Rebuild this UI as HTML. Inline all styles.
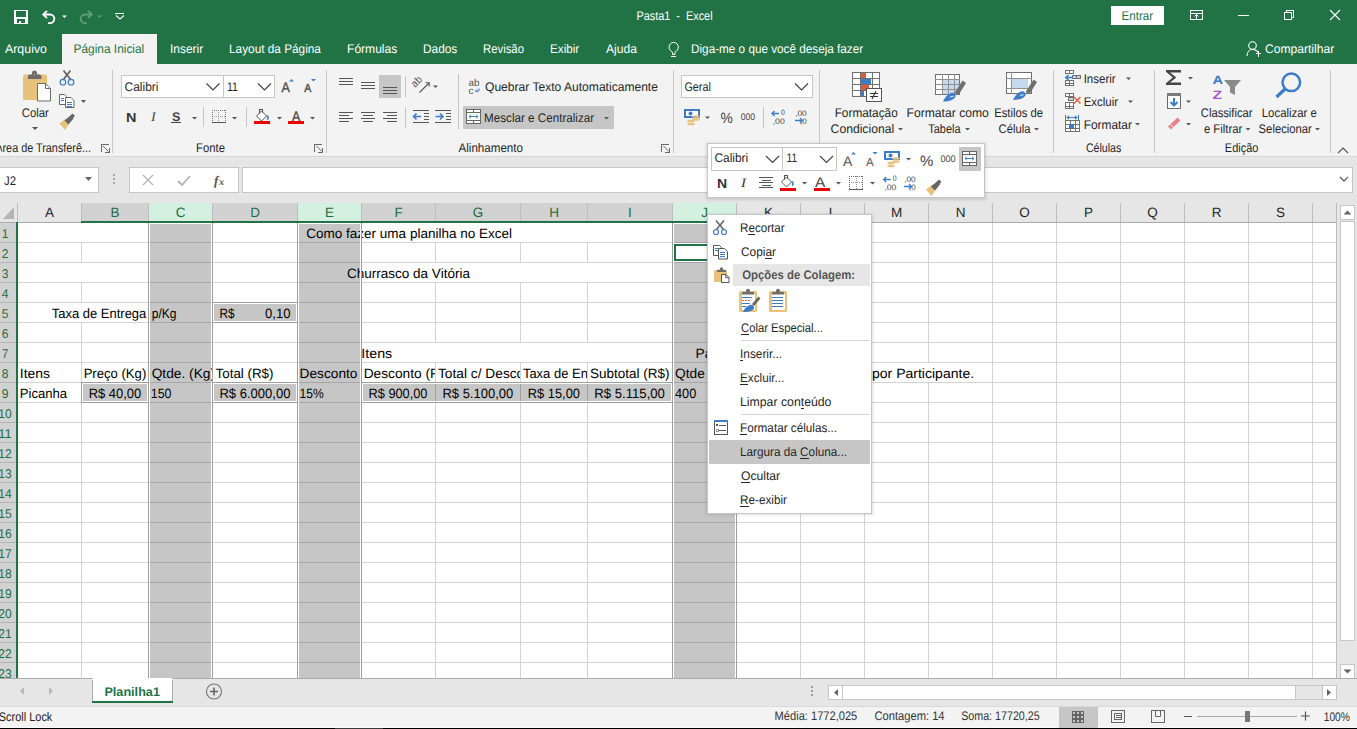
<!DOCTYPE html>
<html><head><meta charset="utf-8"><title>Pasta1 - Excel</title>
<style>html,body{margin:0;padding:0;background:#fff;overflow:hidden;width:1357px;height:729px}svg{display:block}text{shape-rendering:auto}</style>
</head><body><svg width="1357" height="729" viewBox="0 0 1357 729" shape-rendering="crispEdges" text-rendering="geometricPrecision"><defs><clipPath id="c0"><rect x="149" y="362" width="63" height="20"/></clipPath><clipPath id="c1"><rect x="361" y="362" width="74" height="20"/></clipPath><clipPath id="c2"><rect x="436" y="362" width="84" height="20"/></clipPath><clipPath id="c3"><rect x="521" y="362" width="66" height="20"/></clipPath><clipPath id="c4"><rect x="673" y="362" width="35" height="20"/></clipPath><clipPath id="c5"><rect x="673" y="342" width="35" height="20"/></clipPath></defs><rect x="0" y="0" width="1357" height="729" fill="#ffffff" />
<rect x="0" y="0" width="1357" height="64" fill="#217346" />
<rect x="14" y="10" width="14" height="14" fill="#fff" />
<rect x="16" y="11" width="10" height="6" fill="#217346" />
<rect x="17" y="19" width="8" height="4" fill="#217346" />
<rect x="19" y="21" width="2" height="2" fill="#fff" />
<path d="M43.5 14.5h6.5a4.3 4.3 0 0 1 0 8.6h-2" fill="none" stroke="#fff" stroke-width="1.9" style="shape-rendering:auto"/>
<path d="M47 10.8l-3.7 3.7 3.7 3.7" fill="none" stroke="#fff" stroke-width="1.9" style="shape-rendering:auto"/>
<path d="M62 15.5h5l-2.5 2.5z" fill="#fff" style="shape-rendering:auto"/>
<path d="M91.5 14.5h-6.5a4.3 4.3 0 0 0 0 8.6h2" fill="none" stroke="#5f9c79" stroke-width="1.9" style="shape-rendering:auto"/>
<path d="M88 10.8l3.7 3.7-3.7 3.7" fill="none" stroke="#5f9c79" stroke-width="1.9" style="shape-rendering:auto"/>
<path d="M97 15.5h5l-2.5 2.5z" fill="#5f9c79" style="shape-rendering:auto"/>
<rect x="115" y="13" width="9" height="1" fill="#fff"/>
<path d="M116 15.5l4 3.5 4-3.5" fill="none" stroke="#fff" stroke-width="1.1" style="shape-rendering:auto"/>
<text y="20" font-size="12.5" fill="#fff" font-family="Liberation Sans" x="636.43" textLength="76.15" lengthAdjust="spacingAndGlyphs" >Pasta1  -  Excel</text>
<rect x="1111" y="6" width="53" height="19" fill="#fff" rx="1.5"/>
<text y="20" font-size="12.5" fill="#217346" font-family="Liberation Sans" x="1121.58" textLength="31.48" lengthAdjust="spacingAndGlyphs" >Entrar</text>
<rect x="1190.5" y="10.5" width="12" height="9" fill="none" stroke="#fff" stroke-width="1" />
<rect x="1190" y="13" width="13" height="1" fill="#fff"/>
<path d="M1196.5 19v-4.5M1194.5 16.5l2-2 2 2" fill="none" stroke="#fff" stroke-width="1" shape-rendering="auto"/>
<rect x="1238" y="15" width="11" height="1" fill="#fff"/>
<rect x="1284.5" y="12.5" width="7" height="7" fill="none" stroke="#fff" stroke-width="1" />
<path d="M1286.5 12.5v-2h7v7h-2" fill="none" stroke="#fff" stroke-width="1" />
<path d="M1330 10l10 10M1340 10l-10 10" fill="none" stroke="#fff" stroke-width="1.1" shape-rendering="auto"/>
<rect x="62" y="34" width="95" height="30" fill="#f3f3f3" />
<text y="53" font-size="12.5" fill="#fff" font-family="Liberation Sans" x="5.00" textLength="41.95" lengthAdjust="spacingAndGlyphs" >Arquivo</text>
<text y="53" font-size="12.5" fill="#217346" font-family="Liberation Sans" x="73.55" textLength="70.69" lengthAdjust="spacingAndGlyphs" >Página Inicial</text>
<text y="53" font-size="12.5" fill="#fff" font-family="Liberation Sans" x="170.05" textLength="33.11" lengthAdjust="spacingAndGlyphs" >Inserir</text>
<text y="53" font-size="12.5" fill="#fff" font-family="Liberation Sans" x="229.06" textLength="91.90" lengthAdjust="spacingAndGlyphs" >Layout da Página</text>
<text y="53" font-size="12.5" fill="#fff" font-family="Liberation Sans" x="347.04" textLength="50.20" lengthAdjust="spacingAndGlyphs" >Fórmulas</text>
<text y="53" font-size="12.5" fill="#fff" font-family="Liberation Sans" x="423.05" textLength="34.18" lengthAdjust="spacingAndGlyphs" >Dados</text>
<text y="53" font-size="12.5" fill="#fff" font-family="Liberation Sans" x="483.10" textLength="40.86" lengthAdjust="spacingAndGlyphs" >Revisão</text>
<text y="53" font-size="12.5" fill="#fff" font-family="Liberation Sans" x="550.07" textLength="29.08" lengthAdjust="spacingAndGlyphs" >Exibir</text>
<text y="53" font-size="12.5" fill="#fff" font-family="Liberation Sans" x="606.00" textLength="30.95" lengthAdjust="spacingAndGlyphs" >Ajuda</text>
<text y="53" font-size="12.5" fill="#fff" font-family="Liberation Sans" x="691.06" textLength="172.09" lengthAdjust="spacingAndGlyphs" >Diga-me o que você deseja fazer</text>
<path d="M672.5 54.5v-2.2c-2.2-1.3-3.4-3-3.4-5.3a4.6 4.6 0 0 1 9.2 0c0 2.3-1.2 4-3.4 5.3v2.2z" fill="none" stroke="#fff" stroke-width="1" shape-rendering="auto"/>
<rect x="671" y="56" width="5" height="1" fill="#fff"/>
<path d="M1247 56c0-4 2.5-6.5 5.5-6.5s5 2 5.5 3" fill="none" stroke="#fff" stroke-width="1.1" shape-rendering="auto"/>
<circle cx="1252.5" cy="45.5" r="3.8" fill="none" stroke="#fff" stroke-width="1.1" shape-rendering="auto"/>
<path d="M1255.5 53.5h5.5M1258 50.5v6" fill="none" stroke="#fff" stroke-width="1" />
<text y="53" font-size="12.5" fill="#fff" font-family="Liberation Sans" x="1265.00" textLength="69.16" lengthAdjust="spacingAndGlyphs" >Compartilhar</text>
<rect x="0" y="64" width="1357" height="92" fill="#f3f3f3" />
<rect x="0" y="156" width="1357" height="1" fill="#d5d5d5"/>
<rect x="0" y="157" width="1357" height="46" fill="#e6e6e6" />
<rect x="112" y="70" width="1" height="83" fill="#c9c9c9"/>
<rect x="326" y="70" width="1" height="83" fill="#c9c9c9"/>
<rect x="673" y="70" width="1" height="83" fill="#c9c9c9"/>
<rect x="819" y="70" width="1" height="83" fill="#c9c9c9"/>
<rect x="1053" y="70" width="1" height="83" fill="#c9c9c9"/>
<rect x="1154" y="70" width="1" height="83" fill="#c9c9c9"/>
<rect x="1330" y="70" width="1" height="83" fill="#c9c9c9"/>
<text y="152" font-size="12.5" fill="#262626" font-family="Liberation Sans" x="2.50" textLength="88.51" lengthAdjust="spacingAndGlyphs" >rea de Transferê...</text>
<text y="152" font-size="12.5" fill="#262626" font-family="Liberation Sans" x="196.10" textLength="28.86" lengthAdjust="spacingAndGlyphs" >Fonte</text>
<text y="152" font-size="12.5" fill="#262626" font-family="Liberation Sans" x="458.50" textLength="64.46" lengthAdjust="spacingAndGlyphs" >Alinhamento</text>
<path d="M101.0 151.5v-7.5h7.5" fill="none" stroke="#6a6a6a" stroke-width="1" />
<path d="M103.0 146.0l5.5 5.5" fill="none" stroke="#6a6a6a" stroke-width="1" style="shape-rendering:auto"/>
<path d="M109.0 147.5v4.5h-4.5" fill="none" stroke="#6a6a6a" stroke-width="1" />
<path d="M314.5 151.5v-7.5h7.5" fill="none" stroke="#6a6a6a" stroke-width="1" />
<path d="M316.5 146.0l5.5 5.5" fill="none" stroke="#6a6a6a" stroke-width="1" style="shape-rendering:auto"/>
<path d="M322.5 147.5v4.5h-4.5" fill="none" stroke="#6a6a6a" stroke-width="1" />
<path d="M661.5 151.5v-7.5h7.5" fill="none" stroke="#6a6a6a" stroke-width="1" />
<path d="M663.5 146.0l5.5 5.5" fill="none" stroke="#6a6a6a" stroke-width="1" style="shape-rendering:auto"/>
<path d="M669.5 147.5v4.5h-4.5" fill="none" stroke="#6a6a6a" stroke-width="1" />
<path d="M0 145.5l2 6" fill="none" stroke="#444" stroke-width="1.1" style="shape-rendering:auto"/>
<path d="M1338 153l5-5 5 5" fill="none" stroke="#555" stroke-width="1.1" shape-rendering="auto"/>
<path d="M23 76.5a2 2 0 0 1 2-2h20a2 2 0 0 1 2 2v22.5a1 1 0 0 1-1 1h-22a1 1 0 0 1-1-1z" fill="#e8c17a" style="shape-rendering:auto"/>
<path d="M28 79v-2.5a2 2 0 0 1 2-2h2v-1.5a2.5 2.5 0 0 1 5 0v1.5h2.5a2 2 0 0 1 2 2v2.5z" fill="#6d6d6d" style="shape-rendering:auto"/>
<circle cx="34.5" cy="74.5" r="1" fill="#e8c17a"/>
<path d="M37.5 83.5h8l5 5v12.5h-13z" fill="#fff" stroke="#6a6a6a" stroke-width="1" style="shape-rendering:auto"/>
<path d="M45.5 83.5v5h5" fill="none" stroke="#6a6a6a" stroke-width="1" style="shape-rendering:auto"/>
<text y="117" font-size="12.5" fill="#262626" font-family="Liberation Sans" x="21.70" textLength="27.15" lengthAdjust="spacingAndGlyphs" >Colar</text>
<path d="M32 127h6l-3 3z" fill="#555" style="shape-rendering:auto"/>
<path d="M63.5 70.5l7.5 9.5M70.5 70.5l-7.5 9.5" fill="none" stroke="#666" stroke-width="1.8" style="shape-rendering:auto"/>
<circle cx="62.9" cy="82.2" r="2.8" fill="none" stroke="#3d7cc9" stroke-width="1.2" style="shape-rendering:auto"/>
<circle cx="71" cy="82.2" r="2.8" fill="none" stroke="#3d7cc9" stroke-width="1.2" style="shape-rendering:auto"/>
<path d="M59.5 94.5h5l2 2v8h-7z" fill="#fff" stroke="#666" stroke-width="1" style="shape-rendering:auto"/>
<path d="M65.5 97.5h5.5l3 3v7h-8.5z" fill="#fff" stroke="#666" stroke-width="1" style="shape-rendering:auto"/>
<path d="M61 98.5h3M61 100.5h3M67 102.5h5M67 104.5h5M67 106.5h5" fill="none" stroke="#3d7cc9" stroke-width="1" />
<path d="M81 100h5l-2.5 3z" fill="#555" style="shape-rendering:auto"/>
<path d="M59.5 123.5l6.5-5 4 4-5 7.5z" fill="#e8c17a" style="shape-rendering:auto"/>
<path d="M64.5 120.5l6-5 3 3-5 6z" fill="#666" style="shape-rendering:auto"/>
<path d="M69.5 116.5l3-3 2.5 2.5-3 3z" fill="#666" style="shape-rendering:auto"/>
<rect x="121.5" y="75.5" width="102" height="22" fill="#fff" stroke="#c6c6c6" stroke-width="1" />
<rect x="223.5" y="75.5" width="51" height="22" fill="#fff" stroke="#c6c6c6" stroke-width="1" />
<text y="91" font-size="12.5" fill="#262626" font-family="Liberation Sans" x="124.50" textLength="34.05" lengthAdjust="spacingAndGlyphs" >Calibri</text>
<path d="M206.5 83.5l6.5 6.5 6.5-6.5" fill="none" stroke="#444" stroke-width="1.2" style="shape-rendering:auto"/>
<text y="91" font-size="12.5" fill="#262626" font-family="Liberation Sans" x="227.00" textLength="10.96" lengthAdjust="spacingAndGlyphs" >11</text>
<path d="M258 83.5l6.5 6.5 6.5-6.5" fill="none" stroke="#444" stroke-width="1.2" style="shape-rendering:auto"/>
<text y="91.8" font-size="14" fill="#555" font-family="Liberation Sans" x="281.50" textLength="8.31" lengthAdjust="spacingAndGlyphs" stroke="#555" stroke-width="0.5">A</text>
<path d="M289 81.5l2.5-2.5 2.5 2.5z" fill="#3d7cc9" style="shape-rendering:auto"/>
<text y="91.8" font-size="11.5" fill="#555" font-family="Liberation Sans" x="304.20" textLength="7.00" lengthAdjust="spacingAndGlyphs" stroke="#555" stroke-width="0.5">A</text>
<path d="M311 79h5l-2.5 2.5z" fill="#3d7cc9" style="shape-rendering:auto"/>
<text y="122" font-size="13" fill="#333" font-family="Liberation Sans" x="126.00" textLength="10.43" lengthAdjust="spacingAndGlyphs" font-weight="bold" >N</text>
<text y="121" font-size="13" fill="#444" font-family="Liberation Serif" x="151.08" textLength="4.69" lengthAdjust="spacingAndGlyphs" font-style="italic">I</text>
<text y="120.5" font-size="12.5" fill="#444" font-family="Liberation Sans" x="172.00" textLength="8.34" lengthAdjust="spacingAndGlyphs" font-weight="bold" >S</text>
<rect x="171" y="122" width="10" height="1" fill="#444"/>
<path d="M192 117h5l-2.5 2.5z" fill="#555" style="shape-rendering:auto"/>
<rect x="203" y="107" width="1" height="20" fill="#c6c6c6"/>
<rect x="212" y="110" width="1" height="1" fill="#777"/>
<rect x="212" y="116" width="1" height="1" fill="#999"/>
<rect x="214" y="110" width="1" height="1" fill="#777"/>
<rect x="214" y="116" width="1" height="1" fill="#999"/>
<rect x="216" y="110" width="1" height="1" fill="#777"/>
<rect x="216" y="116" width="1" height="1" fill="#999"/>
<rect x="218" y="110" width="1" height="1" fill="#777"/>
<rect x="218" y="116" width="1" height="1" fill="#999"/>
<rect x="220" y="110" width="1" height="1" fill="#777"/>
<rect x="220" y="116" width="1" height="1" fill="#999"/>
<rect x="222" y="110" width="1" height="1" fill="#777"/>
<rect x="222" y="116" width="1" height="1" fill="#999"/>
<rect x="224" y="110" width="1" height="1" fill="#777"/>
<rect x="224" y="116" width="1" height="1" fill="#999"/>
<rect x="212" y="110" width="1" height="1" fill="#777"/>
<rect x="218" y="110" width="1" height="1" fill="#999"/>
<rect x="225" y="110" width="1" height="1" fill="#777"/>
<rect x="212" y="112" width="1" height="1" fill="#777"/>
<rect x="218" y="112" width="1" height="1" fill="#999"/>
<rect x="225" y="112" width="1" height="1" fill="#777"/>
<rect x="212" y="114" width="1" height="1" fill="#777"/>
<rect x="218" y="114" width="1" height="1" fill="#999"/>
<rect x="225" y="114" width="1" height="1" fill="#777"/>
<rect x="212" y="116" width="1" height="1" fill="#777"/>
<rect x="218" y="116" width="1" height="1" fill="#999"/>
<rect x="225" y="116" width="1" height="1" fill="#777"/>
<rect x="212" y="118" width="1" height="1" fill="#777"/>
<rect x="218" y="118" width="1" height="1" fill="#999"/>
<rect x="225" y="118" width="1" height="1" fill="#777"/>
<rect x="212" y="120" width="1" height="1" fill="#777"/>
<rect x="218" y="120" width="1" height="1" fill="#999"/>
<rect x="225" y="120" width="1" height="1" fill="#777"/>
<rect x="212" y="122" width="1" height="1" fill="#777"/>
<rect x="218" y="122" width="1" height="1" fill="#999"/>
<rect x="225" y="122" width="1" height="1" fill="#777"/>
<rect x="212" y="122" width="14" height="1" fill="#555"/>
<path d="M232 117h5l-2.5 2.5z" fill="#555" style="shape-rendering:auto"/>
<rect x="246" y="107" width="1" height="20" fill="#c6c6c6"/>
<path d="M256.5 116l5-5 5 5-5 5z" fill="#fff" stroke="#555" stroke-width="1" style="shape-rendering:auto"/>
<path d="M259.5 113.5v-4h3v3" fill="none" stroke="#555" stroke-width="1.1" style="shape-rendering:auto"/>
<path d="M267 115.5c1.5 1.5 1.5 3 0 4" fill="none" stroke="#3d7cc9" stroke-width="1.6" style="shape-rendering:auto"/>
<rect x="254" y="121" width="16" height="3" fill="#e00" />
<path d="M277 117h5l-2.5 2.5z" fill="#555" style="shape-rendering:auto"/>
<text y="120.8" font-size="14" fill="#505050" font-family="Liberation Sans" x="291.90" textLength="8.22" lengthAdjust="spacingAndGlyphs" stroke="#505050" stroke-width="0.5">A</text>
<rect x="288" y="121" width="16" height="3" fill="#e00" />
<path d="M310 117h5l-2.5 2.5z" fill="#555" style="shape-rendering:auto"/>
<rect x="339" y="78" width="14" height="1" fill="#555"/>
<rect x="339" y="81" width="14" height="1" fill="#555"/>
<rect x="339" y="84" width="14" height="1" fill="#555"/>
<rect x="361" y="82" width="14" height="1" fill="#555"/>
<rect x="361" y="85" width="14" height="1" fill="#555"/>
<rect x="361" y="88" width="14" height="1" fill="#555"/>
<rect x="379" y="75" width="22" height="23" fill="#c6c6c6" />
<rect x="383" y="87" width="14" height="1" fill="#555"/>
<rect x="383" y="90" width="14" height="1" fill="#555"/>
<rect x="383" y="93" width="14" height="1" fill="#555"/>
<rect x="339" y="112" width="14" height="1" fill="#555"/>
<rect x="339" y="115" width="10" height="1" fill="#555"/>
<rect x="339" y="118" width="14" height="1" fill="#555"/>
<rect x="339" y="121" width="10" height="1" fill="#555"/>
<rect x="361" y="112" width="14" height="1" fill="#555"/>
<rect x="363" y="115" width="10" height="1" fill="#555"/>
<rect x="361" y="118" width="14" height="1" fill="#555"/>
<rect x="363" y="121" width="10" height="1" fill="#555"/>
<rect x="383" y="112" width="14" height="1" fill="#555"/>
<rect x="387" y="115" width="10" height="1" fill="#555"/>
<rect x="383" y="118" width="14" height="1" fill="#555"/>
<rect x="387" y="121" width="10" height="1" fill="#555"/>
<rect x="405" y="76" width="1" height="21" fill="#c6c6c6"/>
<rect x="405" y="107" width="1" height="21" fill="#c6c6c6"/>
<text x="0" y="0" font-size="10.5" fill="#555" font-family="Liberation Sans" transform="translate(415 88) rotate(-45)" textLength="11" lengthAdjust="spacingAndGlyphs">ab</text>
<path d="M419.5 92.5l9.5-9.5M425.5 82.8h3.7v3.7" fill="none" stroke="#555" stroke-width="1.1" style="shape-rendering:auto"/>
<path d="M433 85.5h5l-2.5 2.5z" fill="#555" style="shape-rendering:auto"/>
<rect x="413" y="110" width="16" height="1" fill="#555"/>
<rect x="413" y="122" width="16" height="1" fill="#555"/>
<rect x="424" y="113" width="5" height="1" fill="#555"/>
<rect x="424" y="116" width="5" height="1" fill="#555"/>
<rect x="424" y="119" width="5" height="1" fill="#555"/>
<path d="M421 116.5h-7.5M416.5 113.5l-3 3 3 3" fill="none" stroke="#3d7cc9" stroke-width="1.6" style="shape-rendering:auto"/>
<rect x="435" y="110" width="16" height="1" fill="#555"/>
<rect x="435" y="122" width="16" height="1" fill="#555"/>
<rect x="446" y="113" width="5" height="1" fill="#555"/>
<rect x="446" y="116" width="5" height="1" fill="#555"/>
<rect x="446" y="119" width="5" height="1" fill="#555"/>
<path d="M435.5 116.5h7.5M440 113.5l3 3-3 3" fill="none" stroke="#3d7cc9" stroke-width="1.6" style="shape-rendering:auto"/>
<rect x="458" y="74" width="1" height="55" fill="#c6c6c6"/>
<text y="86" font-size="10" fill="#555" font-family="Liberation Sans" x="468.50" textLength="11.06" lengthAdjust="spacingAndGlyphs" >ab</text>
<text y="93.5" font-size="10" fill="#555" font-family="Liberation Sans" x="468.50" textLength="5.00" lengthAdjust="spacingAndGlyphs" >c</text>
<path d="M479 88.5v2.5h-3.5M477 89.5l-1.5 1.5 1.5 1.5" fill="none" stroke="#3d7cc9" stroke-width="1" style="shape-rendering:auto"/>
<text y="91" font-size="12.5" fill="#262626" font-family="Liberation Sans" x="485.00" textLength="172.95" lengthAdjust="spacingAndGlyphs" >Quebrar Texto Automaticamente</text>
<rect x="463" y="106" width="151" height="23" fill="#c6c6c6" />
<rect x="466.5" y="109.5" width="14" height="14" fill="#fff" stroke="#666" stroke-width="1" />
<rect x="466" y="112" width="15" height="1" fill="#666"/>
<rect x="466" y="120" width="15" height="1" fill="#666"/>
<rect x="473" y="109" width="1" height="3" fill="#666"/>
<rect x="473" y="120" width="1" height="4" fill="#666"/>
<path d="M469 116.5h9M470.8 114.8l-1.8 1.7 1.8 1.7M476.2 114.8l1.8 1.7-1.8 1.7" fill="none" stroke="#3d7cc9" stroke-width="1" style="shape-rendering:auto"/>
<text y="122" font-size="12.5" fill="#262626" font-family="Liberation Sans" x="484.07" textLength="110.08" lengthAdjust="spacingAndGlyphs" >Mesclar e Centralizar</text>
<path d="M604 117h5l-2.5 2.5z" fill="#555" style="shape-rendering:auto"/>
<rect x="681.5" y="75.5" width="131" height="22" fill="#fff" stroke="#c6c6c6" stroke-width="1" />
<text y="91" font-size="12.5" fill="#262626" font-family="Liberation Sans" x="684.40" textLength="26.47" lengthAdjust="spacingAndGlyphs" >Geral</text>
<path d="M795 83.5l6.5 6.5 6.5-6.5" fill="none" stroke="#444" stroke-width="1.2" style="shape-rendering:auto"/>
<rect x="684" y="109" width="16" height="9" fill="#3d7cc9" />
<rect x="686" y="111" width="12" height="5" fill="#fff" />
<circle cx="690.5" cy="113.5" r="2" fill="#3d7cc9" style="shape-rendering:auto"/>
<ellipse cx="696" cy="116.5" rx="3.8" ry="1.3" fill="#e8c17a" style="shape-rendering:auto"/>
<ellipse cx="696" cy="119.5" rx="3.8" ry="1.3" fill="#e8c17a" style="shape-rendering:auto"/>
<ellipse cx="691" cy="121" rx="3.8" ry="1.3" fill="#e8c17a" style="shape-rendering:auto"/>
<ellipse cx="691" cy="124" rx="3.8" ry="1.3" fill="#e8c17a" style="shape-rendering:auto"/>
<path d="M705 116.5h5l-2.5 2.5z" fill="#555" style="shape-rendering:auto"/>
<text y="122.5" font-size="15" fill="#444" font-family="Liberation Sans" x="720.40" textLength="12.31" lengthAdjust="spacingAndGlyphs" >%</text>
<text y="120" font-size="9.5" fill="#444" font-family="Liberation Sans" x="740.80" textLength="14.36" lengthAdjust="spacingAndGlyphs" >000</text>
<rect x="763" y="107" width="1" height="21" fill="#c6c6c6"/>
<text y="115.2" font-size="8" fill="#444" font-family="Liberation Sans" x="781.00" textLength="3.83" lengthAdjust="spacingAndGlyphs" >0</text>
<text y="124" font-size="8" fill="#444" font-family="Liberation Sans" x="772.70" textLength="12.01" lengthAdjust="spacingAndGlyphs" >,00</text>
<path d="M779 113.5h-7.5M774.5 111l-2.5 2.5 2.5 2.5" fill="none" stroke="#3d7cc9" stroke-width="1.3" style="shape-rendering:auto"/>
<text y="116" font-size="8" fill="#444" font-family="Liberation Sans" x="795.20" textLength="11.43" lengthAdjust="spacingAndGlyphs" >,00</text>
<text y="124" font-size="8" fill="#444" font-family="Liberation Sans" x="800.00" textLength="6.65" lengthAdjust="spacingAndGlyphs" >,0</text>
<path d="M795 120.5h7.5M800 118l2.5 2.5-2.5 2.5" fill="none" stroke="#3d7cc9" stroke-width="1.3" style="shape-rendering:auto"/>
<rect x="852.5" y="72.5" width="27" height="24" fill="#fff" stroke="#707070" stroke-width="1" />
<rect x="860" y="72" width="1" height="25" fill="#707070"/>
<rect x="872" y="72" width="1" height="25" fill="#707070"/>
<rect x="852" y="78" width="28" height="1" fill="#707070"/>
<rect x="852" y="84" width="28" height="1" fill="#707070"/>
<rect x="852" y="90" width="28" height="1" fill="#707070"/>
<rect x="861" y="73" width="5" height="5" fill="#e05a3a" />
<rect x="861" y="79" width="10" height="5" fill="#3d7cc9" />
<rect x="861" y="85" width="8" height="5" fill="#e05a3a" />
<rect x="861" y="91" width="3" height="5" fill="#3d7cc9" />
<rect x="866.5" y="88.5" width="15" height="13" fill="#fff" stroke="#555" stroke-width="1" />
<path d="M870 93.5h8M870 96.5h8M876 91l-4 8" fill="none" stroke="#333" stroke-width="1.1" style="shape-rendering:auto"/>
<text y="117" font-size="12.5" fill="#262626" font-family="Liberation Sans" x="834.65" textLength="63.10" lengthAdjust="spacingAndGlyphs" >Formatação</text>
<text y="132.7" font-size="12.5" fill="#262626" font-family="Liberation Sans" x="830.60" textLength="63.56" lengthAdjust="spacingAndGlyphs" >Condicional</text>
<path d="M898 128h5l-2.5 2.5z" fill="#555" style="shape-rendering:auto"/>
<rect x="935.5" y="74.5" width="24" height="20" fill="#fff" stroke="#707070" stroke-width="1" />
<rect x="942" y="79" width="17" height="15" fill="#c5d9f1" />
<rect x="942" y="74" width="1" height="21" fill="#909090"/>
<rect x="948" y="74" width="1" height="21" fill="#909090"/>
<rect x="954" y="74" width="1" height="21" fill="#909090"/>
<rect x="935" y="79" width="25" height="1" fill="#909090"/>
<rect x="935" y="84" width="25" height="1" fill="#909090"/>
<rect x="935" y="89" width="25" height="1" fill="#909090"/>
<path d="M954.5 93l8-12.5 3.5 2.5-7.5 12z" fill="#707070" style="shape-rendering:auto"/>
<path d="M943 101.5c2-4 4-7 8-8.5 2.5-1 5 1 4.5 3.5-1 3-6 5-12.5 5z" fill="#3d7cc9" style="shape-rendering:auto"/>
<path d="M950 97.5c1-1 2.5-1.5 3.5-1" fill="none" stroke="#fff" stroke-width="1" style="shape-rendering:auto"/>
<text y="117" font-size="12.5" fill="#262626" font-family="Liberation Sans" x="906.53" textLength="82.32" lengthAdjust="spacingAndGlyphs" >Formatar como</text>
<text y="132.7" font-size="12.5" fill="#262626" font-family="Liberation Sans" x="928.20" textLength="32.36" lengthAdjust="spacingAndGlyphs" >Tabela</text>
<path d="M965 128h5l-2.5 2.5z" fill="#555" style="shape-rendering:auto"/>
<rect x="1006.5" y="72.5" width="25" height="21" fill="#fff" stroke="#707070" stroke-width="1" />
<rect x="1012" y="78" width="16" height="10" fill="#c5d9f1" />
<rect x="1011" y="72" width="1" height="22" fill="#909090"/>
<rect x="1006" y="78" width="26" height="1" fill="#909090"/>
<rect x="1006" y="88" width="26" height="1" fill="#909090"/>
<path d="M1025.5 92l8-12.5 3.5 2.5-7.5 12z" fill="#707070" style="shape-rendering:auto"/>
<path d="M1013 100c2-4 4-7 8-8.5 2.5-1 5 1 4.5 3.5-1 3-6 5-12.5 5z" fill="#3d7cc9" style="shape-rendering:auto"/>
<path d="M1020 96c1-1 2.5-1.5 3.5-1" fill="none" stroke="#fff" stroke-width="1" style="shape-rendering:auto"/>
<text y="117" font-size="12.5" fill="#262626" font-family="Liberation Sans" x="994.20" textLength="48.96" lengthAdjust="spacingAndGlyphs" >Estilos de</text>
<text y="132.7" font-size="12.5" fill="#262626" font-family="Liberation Sans" x="998.60" textLength="31.86" lengthAdjust="spacingAndGlyphs" >Célula</text>
<path d="M1034 128h5l-2.5 2.5z" fill="#555" style="shape-rendering:auto"/>
<rect x="1065.5" y="70.5" width="8" height="3" fill="#fff" stroke="#707070" stroke-width="1" />
<rect x="1069" y="70" width="1" height="4" fill="#707070"/>
<rect x="1072.5" y="75.5" width="8" height="3" fill="#bcd3ee" stroke="#707070" stroke-width="1" />
<rect x="1076" y="75" width="1" height="4" fill="#707070"/>
<rect x="1065.5" y="80.5" width="8" height="5" fill="#fff" stroke="#707070" stroke-width="1" />
<rect x="1069" y="80" width="1" height="6" fill="#707070"/>
<rect x="1065" y="83" width="9" height="1" fill="#707070"/>
<path d="M1073 77.5h-7M1068.5 75l-2.7 2.5 2.7 2.5" fill="none" stroke="#3d7cc9" stroke-width="1.6" style="shape-rendering:auto"/>
<text y="83" font-size="12.5" fill="#262626" font-family="Liberation Sans" x="1083.68" textLength="31.97" lengthAdjust="spacingAndGlyphs" >Inserir</text>
<path d="M1126 77.5h5l-2.5 2.5z" fill="#555" style="shape-rendering:auto"/>
<rect x="1065.5" y="93.5" width="8" height="3" fill="#fff" stroke="#707070" stroke-width="1" />
<rect x="1069" y="93" width="1" height="4" fill="#707070"/>
<rect x="1068.5" y="97.5" width="5" height="3" fill="#bcd3ee" stroke="#707070" stroke-width="1" />
<rect x="1065.5" y="102.5" width="8" height="6" fill="#fff" stroke="#707070" stroke-width="1" />
<rect x="1069" y="102" width="1" height="7" fill="#707070"/>
<rect x="1065" y="106" width="9" height="1" fill="#707070"/>
<path d="M1074 97l6.5 6.5M1080.5 97l-6.5 6.5" fill="none" stroke="#e0684a" stroke-width="1.6" style="shape-rendering:auto"/>
<text y="106" font-size="12.5" fill="#262626" font-family="Liberation Sans" x="1083.68" textLength="34.47" lengthAdjust="spacingAndGlyphs" >Excluir</text>
<path d="M1128 100.5h5l-2.5 2.5z" fill="#555" style="shape-rendering:auto"/>
<rect x="1065.5" y="120.5" width="14" height="11" fill="#fff" stroke="#707070" stroke-width="1" />
<rect x="1070" y="120" width="1" height="12" fill="#707070"/>
<rect x="1075" y="120" width="1" height="12" fill="#707070"/>
<rect x="1065" y="124" width="15" height="1" fill="#707070"/>
<rect x="1065" y="128" width="15" height="1" fill="#707070"/>
<rect x="1069" y="124" width="5" height="4" fill="#3d7cc9" />
<path d="M1065.5 115v5M1078.5 115v5" fill="none" stroke="#3d7cc9" stroke-width="1" />
<path d="M1067 117.5h10M1069 116l-1.8 1.5 1.8 1.5M1075 116l1.8 1.5-1.8 1.5" fill="none" stroke="#3d7cc9" stroke-width="1.1" style="shape-rendering:auto"/>
<text y="128.5" font-size="12.5" fill="#262626" font-family="Liberation Sans" x="1083.65" textLength="48.31" lengthAdjust="spacingAndGlyphs" >Formatar</text>
<path d="M1135 123h5l-2.5 2.5z" fill="#555" style="shape-rendering:auto"/>
<text y="152" font-size="12.5" fill="#262626" font-family="Liberation Sans" x="1085.90" textLength="35.41" lengthAdjust="spacingAndGlyphs" >Células</text>
<path d="M1166 70h15v2.6h-11l6.3 5-6.3 4.8h11v2.6h-15v-1.8l6.8-5.6-6.8-5.8z" fill="#444" style="shape-rendering:auto"/>
<path d="M1188 77h5l-2.5 2.5z" fill="#555" style="shape-rendering:auto"/>
<rect x="1167.5" y="93.5" width="13" height="15" fill="#fff" stroke="#6a6a6a" stroke-width="1" />
<rect x="1167" y="93" width="14" height="3" fill="#7a7a7a" />
<path d="M1174 98v7M1170.5 102l3.5 3.5 3.5-3.5" fill="none" stroke="#3d7cc9" stroke-width="2" style="shape-rendering:auto"/>
<path d="M1186 100.5h5l-2.5 2.5z" fill="#555" style="shape-rendering:auto"/>
<path d="M1170.5 124l7-6.5 3 3-7 6.5z" fill="#e9808d" style="shape-rendering:auto"/>
<path d="M1168 126.5l2-2 3 3-2 2z" fill="#e9808d" style="shape-rendering:auto"/>
<path d="M1186 123h5l-2.5 2.5z" fill="#555" style="shape-rendering:auto"/>
<text y="83.8" font-size="12" fill="#3d7cc9" font-family="Liberation Sans" x="1212.40" textLength="10.59" lengthAdjust="spacingAndGlyphs" font-weight="bold" >A</text>
<text y="98.5" font-size="12" fill="#a25ec9" font-family="Liberation Sans" x="1212.40" textLength="9.53" lengthAdjust="spacingAndGlyphs" font-weight="bold" >Z</text>
<path d="M1224 80h17l-6 7v8l-5-2.5v-5.5z" fill="#8a8a8a" style="shape-rendering:auto"/>
<text y="116.7" font-size="12.5" fill="#262626" font-family="Liberation Sans" x="1200.80" textLength="51.75" lengthAdjust="spacingAndGlyphs" >Classificar</text>
<text y="132.5" font-size="12.5" fill="#262626" font-family="Liberation Sans" x="1203.90" textLength="38.35" lengthAdjust="spacingAndGlyphs" >e Filtrar</text>
<path d="M1245.5 128h5l-2.5 2.5z" fill="#555" style="shape-rendering:auto"/>
<circle cx="1291.3" cy="82.3" r="8.8" fill="none" stroke="#3d7cc9" stroke-width="2.5" style="shape-rendering:auto"/>
<path d="M1285 89l-8.5 8" fill="none" stroke="#3d7cc9" stroke-width="3.2" style="shape-rendering:auto"/>
<text y="116.7" font-size="12.5" fill="#262626" font-family="Liberation Sans" x="1261.79" textLength="55.07" lengthAdjust="spacingAndGlyphs" >Localizar e</text>
<text y="132.5" font-size="12.5" fill="#262626" font-family="Liberation Sans" x="1258.60" textLength="53.25" lengthAdjust="spacingAndGlyphs" >Selecionar</text>
<path d="M1315 128h5l-2.5 2.5z" fill="#555" style="shape-rendering:auto"/>
<text y="152" font-size="12.5" fill="#262626" font-family="Liberation Sans" x="1224.82" textLength="33.54" lengthAdjust="spacingAndGlyphs" >Edição</text>
<rect x="-1" y="167.5" width="99.5" height="25" fill="#fff" stroke="#c6c6c6" stroke-width="1" />
<text y="184.5" font-size="12.5" fill="#262626" font-family="Liberation Sans" x="4.00" textLength="11.96" lengthAdjust="spacingAndGlyphs" >J2</text>
<path d="M85 177h7l-3.5 4z" fill="#666" style="shape-rendering:auto"/>
<rect x="113" y="174" width="2" height="2" fill="#a8a8a8" />
<rect x="113" y="178" width="2" height="2" fill="#a8a8a8" />
<rect x="113" y="182" width="2" height="2" fill="#a8a8a8" />
<rect x="129.5" y="167.5" width="109" height="25" fill="#fff" stroke="#c6c6c6" stroke-width="1" />
<path d="M143 175l10 10M153 175l-10 10" fill="none" stroke="#b3b3b3" stroke-width="1.3" style="shape-rendering:auto"/>
<path d="M178 181l4 4 8-9" fill="none" stroke="#b3b3b3" stroke-width="1.8" style="shape-rendering:auto"/>
<text y="185" font-size="13" fill="#555" font-family="Liberation Serif" x="214" font-style="italic" font-weight="bold">f</text>
<text y="185" font-size="10" fill="#555" font-family="Liberation Serif" x="219" font-style="italic" font-weight="bold">x</text>
<rect x="242.5" y="167.5" width="1110" height="25" fill="#fff" stroke="#c6c6c6" stroke-width="1" />
<path d="M1340 177l4 4 4-4" fill="none" stroke="#666" stroke-width="1.4" style="shape-rendering:auto"/>
<rect x="17" y="223" width="1319" height="455" fill="#fff" />
<rect x="17" y="242" width="1319" height="1" fill="#d4d4d4"/>
<rect x="17" y="262" width="1319" height="1" fill="#d4d4d4"/>
<rect x="17" y="282" width="1319" height="1" fill="#d4d4d4"/>
<rect x="17" y="302" width="1319" height="1" fill="#d4d4d4"/>
<rect x="17" y="322" width="1319" height="1" fill="#d4d4d4"/>
<rect x="17" y="342" width="1319" height="1" fill="#d4d4d4"/>
<rect x="17" y="362" width="1319" height="1" fill="#d4d4d4"/>
<rect x="17" y="382" width="1319" height="1" fill="#d4d4d4"/>
<rect x="17" y="402" width="1319" height="1" fill="#d4d4d4"/>
<rect x="17" y="422" width="1319" height="1" fill="#d4d4d4"/>
<rect x="17" y="442" width="1319" height="1" fill="#d4d4d4"/>
<rect x="17" y="462" width="1319" height="1" fill="#d4d4d4"/>
<rect x="17" y="482" width="1319" height="1" fill="#d4d4d4"/>
<rect x="17" y="502" width="1319" height="1" fill="#d4d4d4"/>
<rect x="17" y="522" width="1319" height="1" fill="#d4d4d4"/>
<rect x="17" y="542" width="1319" height="1" fill="#d4d4d4"/>
<rect x="17" y="562" width="1319" height="1" fill="#d4d4d4"/>
<rect x="17" y="582" width="1319" height="1" fill="#d4d4d4"/>
<rect x="17" y="602" width="1319" height="1" fill="#d4d4d4"/>
<rect x="17" y="622" width="1319" height="1" fill="#d4d4d4"/>
<rect x="17" y="642" width="1319" height="1" fill="#d4d4d4"/>
<rect x="17" y="662" width="1319" height="1" fill="#d4d4d4"/>
<rect x="81" y="223" width="1" height="455" fill="#d4d4d4"/>
<rect x="148" y="223" width="1" height="455" fill="#d4d4d4"/>
<rect x="212" y="223" width="1" height="455" fill="#d4d4d4"/>
<rect x="297" y="223" width="1" height="455" fill="#d4d4d4"/>
<rect x="361" y="223" width="1" height="455" fill="#d4d4d4"/>
<rect x="435" y="223" width="1" height="455" fill="#d4d4d4"/>
<rect x="520" y="223" width="1" height="455" fill="#d4d4d4"/>
<rect x="587" y="223" width="1" height="455" fill="#d4d4d4"/>
<rect x="672" y="223" width="1" height="455" fill="#d4d4d4"/>
<rect x="736" y="223" width="1" height="455" fill="#d4d4d4"/>
<rect x="800" y="223" width="1" height="455" fill="#d4d4d4"/>
<rect x="864" y="223" width="1" height="455" fill="#d4d4d4"/>
<rect x="928" y="223" width="1" height="455" fill="#d4d4d4"/>
<rect x="992" y="223" width="1" height="455" fill="#d4d4d4"/>
<rect x="1056" y="223" width="1" height="455" fill="#d4d4d4"/>
<rect x="1120" y="223" width="1" height="455" fill="#d4d4d4"/>
<rect x="1184" y="223" width="1" height="455" fill="#d4d4d4"/>
<rect x="1248" y="223" width="1" height="455" fill="#d4d4d4"/>
<rect x="1312" y="223" width="1" height="455" fill="#d4d4d4"/>
<rect x="1336" y="203" width="1" height="475" fill="#bdbdbd"/>
<rect x="435" y="223" width="1" height="19" fill="#fff"/>
<rect x="520" y="223" width="1" height="19" fill="#fff"/>
<rect x="587" y="223" width="1" height="19" fill="#fff"/>
<rect x="435" y="263" width="1" height="19" fill="#fff"/>
<rect x="520" y="263" width="1" height="19" fill="#fff"/>
<rect x="587" y="263" width="1" height="19" fill="#fff"/>
<rect x="435" y="343" width="1" height="19" fill="#fff"/>
<rect x="520" y="343" width="1" height="19" fill="#fff"/>
<rect x="587" y="343" width="1" height="19" fill="#fff"/>
<rect x="81" y="303" width="1" height="19" fill="#fff"/>
<rect x="81" y="223" width="1" height="19" fill="#fff"/>
<rect x="81" y="263" width="1" height="19" fill="#fff"/>
<rect x="800" y="363" width="1" height="19" fill="#fff"/>
<rect x="864" y="363" width="1" height="19" fill="#fff"/>
<rect x="928" y="363" width="1" height="19" fill="#fff"/>
<rect x="0" y="203" width="1336" height="19" fill="#e6e6e6" />
<rect x="18" y="203" width="63" height="19" fill="#e6e6e6" />
<rect x="81" y="203" width="1" height="19" fill="#bdbdbd"/>
<text y="217" font-size="13.5" fill="#262626" font-family="Liberation Sans" x="49.5" text-anchor="middle" >A</text>
<rect x="82" y="203" width="66" height="19" fill="#d2d2d2" />
<rect x="148" y="203" width="1" height="19" fill="#bdbdbd"/>
<text y="217" font-size="13.5" fill="#1e6e42" font-family="Liberation Sans" x="115.0" text-anchor="middle" >B</text>
<rect x="149" y="203" width="63" height="19" fill="#d3f0e0" />
<rect x="212" y="203" width="1" height="19" fill="#bdbdbd"/>
<text y="217" font-size="13.5" fill="#1e6e42" font-family="Liberation Sans" x="180.5" text-anchor="middle" >C</text>
<rect x="213" y="203" width="84" height="19" fill="#d2d2d2" />
<rect x="297" y="203" width="1" height="19" fill="#bdbdbd"/>
<text y="217" font-size="13.5" fill="#1e6e42" font-family="Liberation Sans" x="255.0" text-anchor="middle" >D</text>
<rect x="298" y="203" width="63" height="19" fill="#d3f0e0" />
<rect x="361" y="203" width="1" height="19" fill="#bdbdbd"/>
<text y="217" font-size="13.5" fill="#1e6e42" font-family="Liberation Sans" x="329.5" text-anchor="middle" >E</text>
<rect x="362" y="203" width="73" height="19" fill="#d2d2d2" />
<rect x="435" y="203" width="1" height="19" fill="#bdbdbd"/>
<text y="217" font-size="13.5" fill="#1e6e42" font-family="Liberation Sans" x="398.5" text-anchor="middle" >F</text>
<rect x="436" y="203" width="84" height="19" fill="#d2d2d2" />
<rect x="520" y="203" width="1" height="19" fill="#bdbdbd"/>
<text y="217" font-size="13.5" fill="#1e6e42" font-family="Liberation Sans" x="478.0" text-anchor="middle" >G</text>
<rect x="521" y="203" width="66" height="19" fill="#d2d2d2" />
<rect x="587" y="203" width="1" height="19" fill="#bdbdbd"/>
<text y="217" font-size="13.5" fill="#1e6e42" font-family="Liberation Sans" x="554.0" text-anchor="middle" >H</text>
<rect x="588" y="203" width="84" height="19" fill="#d2d2d2" />
<rect x="672" y="203" width="1" height="19" fill="#bdbdbd"/>
<text y="217" font-size="13.5" fill="#1e6e42" font-family="Liberation Sans" x="630.0" text-anchor="middle" >I</text>
<rect x="673" y="203" width="63" height="19" fill="#d3f0e0" />
<rect x="736" y="203" width="1" height="19" fill="#bdbdbd"/>
<text y="217" font-size="13.5" fill="#1e6e42" font-family="Liberation Sans" x="704.5" text-anchor="middle" >J</text>
<rect x="737" y="203" width="63" height="19" fill="#e6e6e6" />
<rect x="800" y="203" width="1" height="19" fill="#bdbdbd"/>
<text y="217" font-size="13.5" fill="#262626" font-family="Liberation Sans" x="768.5" text-anchor="middle" >K</text>
<rect x="801" y="203" width="63" height="19" fill="#e6e6e6" />
<rect x="864" y="203" width="1" height="19" fill="#bdbdbd"/>
<text y="217" font-size="13.5" fill="#262626" font-family="Liberation Sans" x="832.5" text-anchor="middle" >L</text>
<rect x="865" y="203" width="63" height="19" fill="#e6e6e6" />
<rect x="928" y="203" width="1" height="19" fill="#bdbdbd"/>
<text y="217" font-size="13.5" fill="#262626" font-family="Liberation Sans" x="896.5" text-anchor="middle" >M</text>
<rect x="929" y="203" width="63" height="19" fill="#e6e6e6" />
<rect x="992" y="203" width="1" height="19" fill="#bdbdbd"/>
<text y="217" font-size="13.5" fill="#262626" font-family="Liberation Sans" x="960.5" text-anchor="middle" >N</text>
<rect x="993" y="203" width="63" height="19" fill="#e6e6e6" />
<rect x="1056" y="203" width="1" height="19" fill="#bdbdbd"/>
<text y="217" font-size="13.5" fill="#262626" font-family="Liberation Sans" x="1024.5" text-anchor="middle" >O</text>
<rect x="1057" y="203" width="63" height="19" fill="#e6e6e6" />
<rect x="1120" y="203" width="1" height="19" fill="#bdbdbd"/>
<text y="217" font-size="13.5" fill="#262626" font-family="Liberation Sans" x="1088.5" text-anchor="middle" >P</text>
<rect x="1121" y="203" width="63" height="19" fill="#e6e6e6" />
<rect x="1184" y="203" width="1" height="19" fill="#bdbdbd"/>
<text y="217" font-size="13.5" fill="#262626" font-family="Liberation Sans" x="1152.5" text-anchor="middle" >Q</text>
<rect x="1185" y="203" width="63" height="19" fill="#e6e6e6" />
<rect x="1248" y="203" width="1" height="19" fill="#bdbdbd"/>
<text y="217" font-size="13.5" fill="#262626" font-family="Liberation Sans" x="1216.5" text-anchor="middle" >R</text>
<rect x="1249" y="203" width="63" height="19" fill="#e6e6e6" />
<rect x="1312" y="203" width="1" height="19" fill="#bdbdbd"/>
<text y="217" font-size="13.5" fill="#262626" font-family="Liberation Sans" x="1280.5" text-anchor="middle" >S</text>
<rect x="17" y="203" width="1" height="19" fill="#bdbdbd"/>
<path d="M14 207v12h-11z" fill="#b4b4b4" style="shape-rendering:auto"/>
<rect x="0" y="222" width="17" height="1" fill="#ababab"/>
<rect x="17" y="222" width="64" height="1" fill="#ababab"/>
<rect x="81" y="221" width="655" height="2" fill="#217346"/>
<rect x="736" y="222" width="600" height="1" fill="#ababab"/>
<rect x="0" y="223" width="16" height="455" fill="#d2d2d2" />
<text y="238" font-size="12.8" fill="#1e6e42" font-family="Liberation Sans" x="5.0" textLength="6.7" lengthAdjust="spacingAndGlyphs" text-anchor="middle" >1</text>
<rect x="0" y="242" width="16" height="1" fill="#b4b4b4"/>
<text y="258" font-size="12.8" fill="#1e6e42" font-family="Liberation Sans" x="5.0" textLength="6.7" lengthAdjust="spacingAndGlyphs" text-anchor="middle" >2</text>
<rect x="0" y="262" width="16" height="1" fill="#b4b4b4"/>
<text y="278" font-size="12.8" fill="#1e6e42" font-family="Liberation Sans" x="5.0" textLength="6.7" lengthAdjust="spacingAndGlyphs" text-anchor="middle" >3</text>
<rect x="0" y="282" width="16" height="1" fill="#b4b4b4"/>
<text y="298" font-size="12.8" fill="#1e6e42" font-family="Liberation Sans" x="5.0" textLength="6.7" lengthAdjust="spacingAndGlyphs" text-anchor="middle" >4</text>
<rect x="0" y="302" width="16" height="1" fill="#b4b4b4"/>
<text y="318" font-size="12.8" fill="#1e6e42" font-family="Liberation Sans" x="5.0" textLength="6.7" lengthAdjust="spacingAndGlyphs" text-anchor="middle" >5</text>
<rect x="0" y="322" width="16" height="1" fill="#b4b4b4"/>
<text y="338" font-size="12.8" fill="#1e6e42" font-family="Liberation Sans" x="5.0" textLength="6.7" lengthAdjust="spacingAndGlyphs" text-anchor="middle" >6</text>
<rect x="0" y="342" width="16" height="1" fill="#b4b4b4"/>
<text y="358" font-size="12.8" fill="#1e6e42" font-family="Liberation Sans" x="5.0" textLength="6.7" lengthAdjust="spacingAndGlyphs" text-anchor="middle" >7</text>
<rect x="0" y="362" width="16" height="1" fill="#b4b4b4"/>
<text y="378" font-size="12.8" fill="#1e6e42" font-family="Liberation Sans" x="5.0" textLength="6.7" lengthAdjust="spacingAndGlyphs" text-anchor="middle" >8</text>
<rect x="0" y="382" width="16" height="1" fill="#b4b4b4"/>
<text y="398" font-size="12.8" fill="#1e6e42" font-family="Liberation Sans" x="5.0" textLength="6.7" lengthAdjust="spacingAndGlyphs" text-anchor="middle" >9</text>
<rect x="0" y="402" width="16" height="1" fill="#b4b4b4"/>
<text y="418" font-size="12.8" fill="#1e6e42" font-family="Liberation Sans" x="5.0" textLength="13.4" lengthAdjust="spacingAndGlyphs" text-anchor="middle" >10</text>
<rect x="0" y="422" width="16" height="1" fill="#b4b4b4"/>
<text y="438" font-size="12.8" fill="#1e6e42" font-family="Liberation Sans" x="5.0" textLength="13.4" lengthAdjust="spacingAndGlyphs" text-anchor="middle" >11</text>
<rect x="0" y="442" width="16" height="1" fill="#b4b4b4"/>
<text y="458" font-size="12.8" fill="#1e6e42" font-family="Liberation Sans" x="5.0" textLength="13.4" lengthAdjust="spacingAndGlyphs" text-anchor="middle" >12</text>
<rect x="0" y="462" width="16" height="1" fill="#b4b4b4"/>
<text y="478" font-size="12.8" fill="#1e6e42" font-family="Liberation Sans" x="5.0" textLength="13.4" lengthAdjust="spacingAndGlyphs" text-anchor="middle" >13</text>
<rect x="0" y="482" width="16" height="1" fill="#b4b4b4"/>
<text y="498" font-size="12.8" fill="#1e6e42" font-family="Liberation Sans" x="5.0" textLength="13.4" lengthAdjust="spacingAndGlyphs" text-anchor="middle" >14</text>
<rect x="0" y="502" width="16" height="1" fill="#b4b4b4"/>
<text y="518" font-size="12.8" fill="#1e6e42" font-family="Liberation Sans" x="5.0" textLength="13.4" lengthAdjust="spacingAndGlyphs" text-anchor="middle" >15</text>
<rect x="0" y="522" width="16" height="1" fill="#b4b4b4"/>
<text y="538" font-size="12.8" fill="#1e6e42" font-family="Liberation Sans" x="5.0" textLength="13.4" lengthAdjust="spacingAndGlyphs" text-anchor="middle" >16</text>
<rect x="0" y="542" width="16" height="1" fill="#b4b4b4"/>
<text y="558" font-size="12.8" fill="#1e6e42" font-family="Liberation Sans" x="5.0" textLength="13.4" lengthAdjust="spacingAndGlyphs" text-anchor="middle" >17</text>
<rect x="0" y="562" width="16" height="1" fill="#b4b4b4"/>
<text y="578" font-size="12.8" fill="#1e6e42" font-family="Liberation Sans" x="5.0" textLength="13.4" lengthAdjust="spacingAndGlyphs" text-anchor="middle" >18</text>
<rect x="0" y="582" width="16" height="1" fill="#b4b4b4"/>
<text y="598" font-size="12.8" fill="#1e6e42" font-family="Liberation Sans" x="5.0" textLength="13.4" lengthAdjust="spacingAndGlyphs" text-anchor="middle" >19</text>
<rect x="0" y="602" width="16" height="1" fill="#b4b4b4"/>
<text y="618" font-size="12.8" fill="#1e6e42" font-family="Liberation Sans" x="5.0" textLength="13.4" lengthAdjust="spacingAndGlyphs" text-anchor="middle" >20</text>
<rect x="0" y="622" width="16" height="1" fill="#b4b4b4"/>
<text y="638" font-size="12.8" fill="#1e6e42" font-family="Liberation Sans" x="5.0" textLength="13.4" lengthAdjust="spacingAndGlyphs" text-anchor="middle" >21</text>
<rect x="0" y="642" width="16" height="1" fill="#b4b4b4"/>
<text y="658" font-size="12.8" fill="#1e6e42" font-family="Liberation Sans" x="5.0" textLength="13.4" lengthAdjust="spacingAndGlyphs" text-anchor="middle" >22</text>
<rect x="0" y="662" width="16" height="1" fill="#b4b4b4"/>
<text y="678" font-size="12.8" fill="#1e6e42" font-family="Liberation Sans" x="5.0" textLength="13.4" lengthAdjust="spacingAndGlyphs" text-anchor="middle" >23</text>
<rect x="16" y="222" width="2" height="456" fill="#217346"/>
<rect x="150" y="224" width="61" height="454" fill="#c6c6c6" />
<rect x="148" y="223" width="1" height="455" fill="#9e9e9e"/>
<rect x="212" y="223" width="1" height="455" fill="#9e9e9e"/>
<rect x="149" y="223" width="1" height="455" fill="#fff"/>
<rect x="211" y="223" width="1" height="455" fill="#fff"/>
<rect x="149" y="223" width="63" height="1" fill="#fff"/>
<rect x="150" y="242" width="61" height="1" fill="#a6a6a6"/>
<rect x="150" y="262" width="61" height="1" fill="#a6a6a6"/>
<rect x="150" y="282" width="61" height="1" fill="#a6a6a6"/>
<rect x="150" y="302" width="61" height="1" fill="#a6a6a6"/>
<rect x="150" y="322" width="61" height="1" fill="#a6a6a6"/>
<rect x="150" y="342" width="61" height="1" fill="#a6a6a6"/>
<rect x="150" y="362" width="61" height="1" fill="#a6a6a6"/>
<rect x="150" y="382" width="61" height="1" fill="#a6a6a6"/>
<rect x="150" y="402" width="61" height="1" fill="#a6a6a6"/>
<rect x="150" y="422" width="61" height="1" fill="#a6a6a6"/>
<rect x="150" y="442" width="61" height="1" fill="#a6a6a6"/>
<rect x="150" y="462" width="61" height="1" fill="#a6a6a6"/>
<rect x="150" y="482" width="61" height="1" fill="#a6a6a6"/>
<rect x="150" y="502" width="61" height="1" fill="#a6a6a6"/>
<rect x="150" y="522" width="61" height="1" fill="#a6a6a6"/>
<rect x="150" y="542" width="61" height="1" fill="#a6a6a6"/>
<rect x="150" y="562" width="61" height="1" fill="#a6a6a6"/>
<rect x="150" y="582" width="61" height="1" fill="#a6a6a6"/>
<rect x="150" y="602" width="61" height="1" fill="#a6a6a6"/>
<rect x="150" y="622" width="61" height="1" fill="#a6a6a6"/>
<rect x="150" y="642" width="61" height="1" fill="#a6a6a6"/>
<rect x="150" y="662" width="61" height="1" fill="#a6a6a6"/>
<rect x="299" y="224" width="61" height="454" fill="#c6c6c6" />
<rect x="297" y="223" width="1" height="455" fill="#9e9e9e"/>
<rect x="361" y="223" width="1" height="455" fill="#9e9e9e"/>
<rect x="298" y="223" width="1" height="455" fill="#fff"/>
<rect x="360" y="223" width="1" height="455" fill="#fff"/>
<rect x="298" y="223" width="63" height="1" fill="#fff"/>
<rect x="299" y="242" width="61" height="1" fill="#a6a6a6"/>
<rect x="299" y="262" width="61" height="1" fill="#a6a6a6"/>
<rect x="299" y="282" width="61" height="1" fill="#a6a6a6"/>
<rect x="299" y="302" width="61" height="1" fill="#a6a6a6"/>
<rect x="299" y="322" width="61" height="1" fill="#a6a6a6"/>
<rect x="299" y="342" width="61" height="1" fill="#a6a6a6"/>
<rect x="299" y="362" width="61" height="1" fill="#a6a6a6"/>
<rect x="299" y="382" width="61" height="1" fill="#a6a6a6"/>
<rect x="299" y="402" width="61" height="1" fill="#a6a6a6"/>
<rect x="299" y="422" width="61" height="1" fill="#a6a6a6"/>
<rect x="299" y="442" width="61" height="1" fill="#a6a6a6"/>
<rect x="299" y="462" width="61" height="1" fill="#a6a6a6"/>
<rect x="299" y="482" width="61" height="1" fill="#a6a6a6"/>
<rect x="299" y="502" width="61" height="1" fill="#a6a6a6"/>
<rect x="299" y="522" width="61" height="1" fill="#a6a6a6"/>
<rect x="299" y="542" width="61" height="1" fill="#a6a6a6"/>
<rect x="299" y="562" width="61" height="1" fill="#a6a6a6"/>
<rect x="299" y="582" width="61" height="1" fill="#a6a6a6"/>
<rect x="299" y="602" width="61" height="1" fill="#a6a6a6"/>
<rect x="299" y="622" width="61" height="1" fill="#a6a6a6"/>
<rect x="299" y="642" width="61" height="1" fill="#a6a6a6"/>
<rect x="299" y="662" width="61" height="1" fill="#a6a6a6"/>
<rect x="674" y="224" width="61" height="454" fill="#c6c6c6" />
<rect x="672" y="223" width="1" height="455" fill="#9e9e9e"/>
<rect x="736" y="223" width="1" height="455" fill="#9e9e9e"/>
<rect x="673" y="223" width="1" height="455" fill="#fff"/>
<rect x="735" y="223" width="1" height="455" fill="#fff"/>
<rect x="673" y="223" width="63" height="1" fill="#fff"/>
<rect x="674" y="242" width="61" height="1" fill="#a6a6a6"/>
<rect x="674" y="262" width="61" height="1" fill="#a6a6a6"/>
<rect x="674" y="282" width="61" height="1" fill="#a6a6a6"/>
<rect x="674" y="302" width="61" height="1" fill="#a6a6a6"/>
<rect x="674" y="322" width="61" height="1" fill="#a6a6a6"/>
<rect x="674" y="342" width="61" height="1" fill="#a6a6a6"/>
<rect x="674" y="362" width="61" height="1" fill="#a6a6a6"/>
<rect x="674" y="382" width="61" height="1" fill="#a6a6a6"/>
<rect x="674" y="402" width="61" height="1" fill="#a6a6a6"/>
<rect x="674" y="422" width="61" height="1" fill="#a6a6a6"/>
<rect x="674" y="442" width="61" height="1" fill="#a6a6a6"/>
<rect x="674" y="462" width="61" height="1" fill="#a6a6a6"/>
<rect x="674" y="482" width="61" height="1" fill="#a6a6a6"/>
<rect x="674" y="502" width="61" height="1" fill="#a6a6a6"/>
<rect x="674" y="522" width="61" height="1" fill="#a6a6a6"/>
<rect x="674" y="542" width="61" height="1" fill="#a6a6a6"/>
<rect x="674" y="562" width="61" height="1" fill="#a6a6a6"/>
<rect x="674" y="582" width="61" height="1" fill="#a6a6a6"/>
<rect x="674" y="602" width="61" height="1" fill="#a6a6a6"/>
<rect x="674" y="622" width="61" height="1" fill="#a6a6a6"/>
<rect x="674" y="642" width="61" height="1" fill="#a6a6a6"/>
<rect x="674" y="662" width="61" height="1" fill="#a6a6a6"/>
<rect x="81" y="382" width="68" height="1" fill="#9e9e9e"/>
<rect x="81" y="402" width="68" height="1" fill="#9e9e9e"/>
<rect x="81" y="382" width="1" height="20" fill="#9e9e9e"/>
<rect x="148" y="382" width="1" height="20" fill="#9e9e9e"/>
<rect x="82" y="383" width="66" height="19" fill="#fff" />
<rect x="83" y="384" width="64" height="17" fill="#c6c6c6" />
<rect x="212" y="302" width="86" height="1" fill="#9e9e9e"/>
<rect x="212" y="322" width="86" height="1" fill="#9e9e9e"/>
<rect x="212" y="302" width="1" height="20" fill="#9e9e9e"/>
<rect x="297" y="302" width="1" height="20" fill="#9e9e9e"/>
<rect x="213" y="303" width="84" height="19" fill="#fff" />
<rect x="214" y="304" width="82" height="17" fill="#c6c6c6" />
<rect x="212" y="382" width="86" height="1" fill="#9e9e9e"/>
<rect x="212" y="402" width="86" height="1" fill="#9e9e9e"/>
<rect x="212" y="382" width="1" height="20" fill="#9e9e9e"/>
<rect x="297" y="382" width="1" height="20" fill="#9e9e9e"/>
<rect x="213" y="383" width="84" height="19" fill="#fff" />
<rect x="214" y="384" width="82" height="17" fill="#c6c6c6" />
<rect x="361" y="382" width="312" height="1" fill="#9e9e9e"/>
<rect x="361" y="402" width="312" height="1" fill="#9e9e9e"/>
<rect x="361" y="382" width="1" height="20" fill="#9e9e9e"/>
<rect x="672" y="382" width="1" height="20" fill="#9e9e9e"/>
<rect x="362" y="383" width="310" height="19" fill="#fff" />
<rect x="363" y="384" width="308" height="17" fill="#c6c6c6" />
<rect x="435" y="384" width="1" height="17" fill="#9e9e9e"/>
<rect x="520" y="384" width="1" height="17" fill="#9e9e9e"/>
<rect x="587" y="384" width="1" height="17" fill="#9e9e9e"/>
<rect x="673" y="243" width="63" height="19" fill="#fff" />
<rect x="675" y="245" width="61" height="15" fill="none" stroke="#217346" stroke-width="2" />
<text y="238" font-size="13.5" fill="#000" font-family="Liberation Sans" x="306.30" textLength="205.70" lengthAdjust="spacingAndGlyphs" >Como fazer uma planilha no Excel</text>
<text y="278" font-size="13.5" fill="#000" font-family="Liberation Sans" x="347.00" textLength="122.91" lengthAdjust="spacingAndGlyphs" >Churrasco da Vitória</text>
<text y="318" font-size="13.5" fill="#000" font-family="Liberation Sans" x="51.70" textLength="94.63" lengthAdjust="spacingAndGlyphs" >Taxa de Entrega</text>
<text y="318" font-size="13.5" fill="#000" font-family="Liberation Sans" x="151.70" textLength="24.75" lengthAdjust="spacingAndGlyphs" >p/Kg</text>
<text y="318" font-size="13.5" fill="#000" font-family="Liberation Sans" x="219.53" textLength="15.04" lengthAdjust="spacingAndGlyphs" >R$</text>
<text y="318" font-size="13.5" fill="#000" font-family="Liberation Sans" x="265.00" textLength="25.49" lengthAdjust="spacingAndGlyphs" >0,10</text>
<text y="358" font-size="13.5" fill="#000" font-family="Liberation Sans" x="361.34" textLength="30.89" lengthAdjust="spacingAndGlyphs" >Itens</text>
<text y="378" font-size="13.5" fill="#000" font-family="Liberation Sans" x="19.77" textLength="30.28" lengthAdjust="spacingAndGlyphs" >Itens</text>
<text y="378" font-size="13.5" fill="#000" font-family="Liberation Sans" x="83.63" textLength="62.65" lengthAdjust="spacingAndGlyphs" >Preço (Kg)</text>
<text y="378" font-size="13.5" fill="#000" font-family="Liberation Sans" x="215.60" textLength="57.89" lengthAdjust="spacingAndGlyphs" >Total (R$)</text>
<text y="378" font-size="13.5" fill="#000" font-family="Liberation Sans" x="299.48" textLength="58.03" lengthAdjust="spacingAndGlyphs" >Desconto</text>
<text y="378" font-size="13.5" fill="#000" font-family="Liberation Sans" x="590.00" textLength="79.50" lengthAdjust="spacingAndGlyphs" >Subtotal (R$)</text>
<text y="398" font-size="13.5" fill="#000" font-family="Liberation Sans" x="19.83" textLength="47.29" lengthAdjust="spacingAndGlyphs" >Picanha</text>
<text y="398" font-size="13.5" fill="#000" font-family="Liberation Sans" x="88.64" textLength="52.55" lengthAdjust="spacingAndGlyphs" >R$ 40,00</text>
<text y="398" font-size="13.5" fill="#000" font-family="Liberation Sans" x="150.78" textLength="20.68" lengthAdjust="spacingAndGlyphs" >150</text>
<text y="398" font-size="13.5" fill="#000" font-family="Liberation Sans" x="219.43" textLength="71.06" lengthAdjust="spacingAndGlyphs" >R$ 6.000,00</text>
<text y="398" font-size="13.5" fill="#000" font-family="Liberation Sans" x="299.60" textLength="24.20" lengthAdjust="spacingAndGlyphs" >15%</text>
<text y="398" font-size="13.5" fill="#000" font-family="Liberation Sans" x="368.55" textLength="58.93" lengthAdjust="spacingAndGlyphs" >R$ 900,00</text>
<text y="398" font-size="13.5" fill="#000" font-family="Liberation Sans" x="442.44" textLength="70.75" lengthAdjust="spacingAndGlyphs" >R$ 5.100,00</text>
<text y="398" font-size="13.5" fill="#000" font-family="Liberation Sans" x="527.85" textLength="52.13" lengthAdjust="spacingAndGlyphs" >R$ 15,00</text>
<text y="398" font-size="13.5" fill="#000" font-family="Liberation Sans" x="594.33" textLength="70.57" lengthAdjust="spacingAndGlyphs" >R$ 5.115,00</text>
<text y="398" font-size="13.5" fill="#000" font-family="Liberation Sans" x="675.00" textLength="21.28" lengthAdjust="spacingAndGlyphs" >400</text>
<text y="378" font-size="13.5" fill="#000" font-family="Liberation Sans" x="151.70" textLength="63.37" lengthAdjust="spacingAndGlyphs" clip-path="url(#c0)" >Qtde. (Kg)</text>
<text y="378" font-size="13.5" fill="#000" font-family="Liberation Sans" x="363.68" textLength="88.56" lengthAdjust="spacingAndGlyphs" clip-path="url(#c1)" >Desconto (R$)</text>
<text y="378" font-size="13.5" fill="#000" font-family="Liberation Sans" x="438.00" textLength="105.37" lengthAdjust="spacingAndGlyphs" clip-path="url(#c2)" >Total c/ Desconto</text>
<text y="378" font-size="13.5" fill="#000" font-family="Liberation Sans" x="522.90" textLength="94.63" lengthAdjust="spacingAndGlyphs" clip-path="url(#c3)" >Taxa de Entrega</text>
<text y="378" font-size="13.5" fill="#000" font-family="Liberation Sans" x="675.00" textLength="29.78" lengthAdjust="spacingAndGlyphs" clip-path="url(#c4)" >Qtde</text>
<text y="358" font-size="13.5" fill="#000" font-family="Liberation Sans" x="695.48" textLength="16.80" lengthAdjust="spacingAndGlyphs" clip-path="url(#c5)" >Pa</text>
<text y="378" font-size="13.5" fill="#000" font-family="Liberation Sans" x="872.00" textLength="102.08" lengthAdjust="spacingAndGlyphs" >por Participante.</text>
<rect x="360" y="223" width="1" height="19" fill="#fff"/>
<rect x="361" y="223" width="1" height="19" fill="#9e9e9e"/>
<rect x="360" y="263" width="1" height="19" fill="#fff"/>
<rect x="361" y="263" width="1" height="19" fill="#9e9e9e"/>
<filter id="sh" x="-10%" y="-10%" width="120%" height="130%"><feGaussianBlur stdDeviation="1.6"/></filter>
<rect x="706" y="143" width="280" height="57" fill="rgba(0,0,0,0.13)" filter="url(#sh)"/>
<rect x="707.5" y="143.5" width="277" height="54" fill="#fff" stroke="#c6c6c6" stroke-width="1" />
<rect x="711.5" y="147.5" width="71" height="23" fill="#fff" stroke="#c6c6c6" stroke-width="1" />
<rect x="782.5" y="147.5" width="54" height="23" fill="#fff" stroke="#c6c6c6" stroke-width="1" />
<text y="162" font-size="12.5" fill="#262626" font-family="Liberation Sans" x="714.50" textLength="33.74" lengthAdjust="spacingAndGlyphs" >Calibri</text>
<path d="M766 156l6.5 6.5 6.5-6.5" fill="none" stroke="#444" stroke-width="1.2" style="shape-rendering:auto"/>
<text y="162" font-size="12.5" fill="#262626" font-family="Liberation Sans" x="786.60" textLength="10.56" lengthAdjust="spacingAndGlyphs" >11</text>
<path d="M820 156l6.5 6.5 6.5-6.5" fill="none" stroke="#444" stroke-width="1.2" style="shape-rendering:auto"/>
<text y="166" font-size="14" fill="#555" font-family="Liberation Sans" x="843.00" textLength="9.34" lengthAdjust="spacingAndGlyphs" >A</text>
<path d="M851 154.5l2.5-2.5 2.5 2.5z" fill="#3d7cc9" style="shape-rendering:auto"/>
<text y="166" font-size="11.5" fill="#555" font-family="Liberation Sans" x="866.00" textLength="7.67" lengthAdjust="spacingAndGlyphs" >A</text>
<path d="M872.5 152h5l-2.5 2.5z" fill="#3d7cc9" style="shape-rendering:auto"/>
<rect x="884" y="151" width="16" height="9" fill="#3d7cc9" />
<rect x="886" y="153" width="12" height="5" fill="#fff" />
<circle cx="890.5" cy="155.5" r="2" fill="#3d7cc9" style="shape-rendering:auto"/>
<ellipse cx="896" cy="158.5" rx="3.8" ry="1.3" fill="#e8c17a" style="shape-rendering:auto"/>
<ellipse cx="896" cy="161.5" rx="3.8" ry="1.3" fill="#e8c17a" style="shape-rendering:auto"/>
<ellipse cx="891" cy="163" rx="3.8" ry="1.3" fill="#e8c17a" style="shape-rendering:auto"/>
<ellipse cx="891" cy="166" rx="3.8" ry="1.3" fill="#e8c17a" style="shape-rendering:auto"/>
<path d="M906 158h5l-2.5 2.5z" fill="#555" style="shape-rendering:auto"/>
<text y="165.5" font-size="15" fill="#444" font-family="Liberation Sans" x="920.00" textLength="13.34" lengthAdjust="spacingAndGlyphs" >%</text>
<text y="162" font-size="9.5" fill="#444" font-family="Liberation Sans" x="940.40" textLength="15.27" lengthAdjust="spacingAndGlyphs" >000</text>
<rect x="959" y="147" width="22" height="24" fill="#c6c6c6" />
<rect x="962.5" y="151.5" width="14" height="14" fill="#fff" stroke="#666" stroke-width="1" />
<rect x="962" y="154" width="15" height="1" fill="#666"/>
<rect x="962" y="162" width="15" height="1" fill="#666"/>
<rect x="969" y="151" width="1" height="3" fill="#666"/>
<rect x="969" y="162" width="1" height="4" fill="#666"/>
<path d="M965 158.5h9M966.8 156.8l-1.8 1.7 1.8 1.7M972.2 156.8l1.8 1.7-1.8 1.7" fill="none" stroke="#3d7cc9" stroke-width="1" style="shape-rendering:auto"/>
<text y="188" font-size="13" fill="#333" font-family="Liberation Sans" x="717.00" textLength="10.12" lengthAdjust="spacingAndGlyphs" font-weight="bold" >N</text>
<text y="187" font-size="13" fill="#444" font-family="Liberation Serif" x="740.75" textLength="5.41" lengthAdjust="spacingAndGlyphs" font-style="italic">I</text>
<rect x="759" y="177.0" width="14" height="1" fill="#555"/>
<rect x="761.5" y="179.5" width="9.0" height="1" fill="#555"/>
<rect x="759" y="182.0" width="14" height="1" fill="#555"/>
<rect x="761.5" y="184.5" width="9.0" height="1" fill="#555"/>
<rect x="759" y="187.0" width="14" height="1" fill="#555"/>
<path d="M781.5 182l5-5 5 5-5 5z" fill="#fff" stroke="#555" stroke-width="1" style="shape-rendering:auto"/>
<path d="M784.5 179.5v-4h3v3" fill="none" stroke="#555" stroke-width="1.1" style="shape-rendering:auto"/>
<path d="M792 181.5c1.5 1.5 1.5 3 0 4" fill="none" stroke="#3d7cc9" stroke-width="1.6" style="shape-rendering:auto"/>
<rect x="780" y="188" width="16" height="3" fill="#e00" />
<path d="M802 182h5l-2.5 2.5z" fill="#555" style="shape-rendering:auto"/>
<text y="187" font-size="14" fill="#444" font-family="Liberation Sans" x="815.00" textLength="10.27" lengthAdjust="spacingAndGlyphs" >A</text>
<rect x="814" y="188" width="16" height="3" fill="#e00" />
<path d="M836 182h5l-2.5 2.5z" fill="#555" style="shape-rendering:auto"/>
<rect x="849" y="176" width="1" height="1" fill="#666"/>
<rect x="849" y="182" width="1" height="1" fill="#999"/>
<rect x="849" y="189" width="1" height="1" fill="#666"/>
<rect x="851" y="176" width="1" height="1" fill="#666"/>
<rect x="851" y="182" width="1" height="1" fill="#999"/>
<rect x="851" y="189" width="1" height="1" fill="#666"/>
<rect x="853" y="176" width="1" height="1" fill="#666"/>
<rect x="853" y="182" width="1" height="1" fill="#999"/>
<rect x="853" y="189" width="1" height="1" fill="#666"/>
<rect x="855" y="176" width="1" height="1" fill="#666"/>
<rect x="855" y="182" width="1" height="1" fill="#999"/>
<rect x="855" y="189" width="1" height="1" fill="#666"/>
<rect x="857" y="176" width="1" height="1" fill="#666"/>
<rect x="857" y="182" width="1" height="1" fill="#999"/>
<rect x="857" y="189" width="1" height="1" fill="#666"/>
<rect x="859" y="176" width="1" height="1" fill="#666"/>
<rect x="859" y="182" width="1" height="1" fill="#999"/>
<rect x="859" y="189" width="1" height="1" fill="#666"/>
<rect x="861" y="176" width="1" height="1" fill="#666"/>
<rect x="861" y="182" width="1" height="1" fill="#999"/>
<rect x="861" y="189" width="1" height="1" fill="#666"/>
<rect x="849" y="176" width="1" height="1" fill="#666"/>
<rect x="856" y="176" width="1" height="1" fill="#999"/>
<rect x="862" y="176" width="1" height="1" fill="#666"/>
<rect x="849" y="178" width="1" height="1" fill="#666"/>
<rect x="856" y="178" width="1" height="1" fill="#999"/>
<rect x="862" y="178" width="1" height="1" fill="#666"/>
<rect x="849" y="180" width="1" height="1" fill="#666"/>
<rect x="856" y="180" width="1" height="1" fill="#999"/>
<rect x="862" y="180" width="1" height="1" fill="#666"/>
<rect x="849" y="182" width="1" height="1" fill="#666"/>
<rect x="856" y="182" width="1" height="1" fill="#999"/>
<rect x="862" y="182" width="1" height="1" fill="#666"/>
<rect x="849" y="184" width="1" height="1" fill="#666"/>
<rect x="856" y="184" width="1" height="1" fill="#999"/>
<rect x="862" y="184" width="1" height="1" fill="#666"/>
<rect x="849" y="186" width="1" height="1" fill="#666"/>
<rect x="856" y="186" width="1" height="1" fill="#999"/>
<rect x="862" y="186" width="1" height="1" fill="#666"/>
<rect x="849" y="188" width="1" height="1" fill="#666"/>
<rect x="856" y="188" width="1" height="1" fill="#999"/>
<rect x="862" y="188" width="1" height="1" fill="#666"/>
<rect x="849" y="189" width="14" height="1" fill="#555"/>
<path d="M870 182h5l-2.5 2.5z" fill="#555" style="shape-rendering:auto"/>
<text y="181.2" font-size="8" fill="#444" font-family="Liberation Sans" x="892.70" textLength="3.83" lengthAdjust="spacingAndGlyphs" >0</text>
<text y="190" font-size="8" fill="#444" font-family="Liberation Sans" x="884.40" textLength="12.01" lengthAdjust="spacingAndGlyphs" >,00</text>
<path d="M890.7 179.5h-7.5M886.2 177l-2.5 2.5 2.5 2.5" fill="none" stroke="#3d7cc9" stroke-width="1.3" style="shape-rendering:auto"/>
<text y="182" font-size="8" fill="#444" font-family="Liberation Sans" x="904.20" textLength="11.43" lengthAdjust="spacingAndGlyphs" >,00</text>
<text y="190" font-size="8" fill="#444" font-family="Liberation Sans" x="909.00" textLength="6.65" lengthAdjust="spacingAndGlyphs" >,0</text>
<path d="M904 186.5h7.5M909 184l2.5 2.5-2.5 2.5" fill="none" stroke="#3d7cc9" stroke-width="1.3" style="shape-rendering:auto"/>
<path d="M926 189.5l6.5-5 4 4-5 7.5z" fill="#e8c17a" style="shape-rendering:auto"/>
<path d="M931 186.5l6-5 3 3-5 6z" fill="#666" style="shape-rendering:auto"/>
<path d="M936 182.5l3-3 2.5 2.5-3 3z" fill="#666" style="shape-rendering:auto"/>
<rect x="706" y="214" width="167" height="301" fill="rgba(0,0,0,0.13)" filter="url(#sh)"/>
<rect x="707.5" y="214.5" width="164" height="299" fill="#fff" stroke="#c6c6c6" stroke-width="1" />
<rect x="733" y="264" width="137" height="22" fill="#e6e6e6" />
<rect x="709" y="440" width="161" height="24" fill="#c6c6c6" />
<text y="232" font-size="12.5" fill="#262626" font-family="Liberation Sans" x="740.07" textLength="44.58" lengthAdjust="spacingAndGlyphs" >Recortar</text>
<rect x="748" y="234" width="7" height="1" fill="#262626"/>
<text y="256" font-size="12.5" fill="#262626" font-family="Liberation Sans" x="741.00" textLength="35.05" lengthAdjust="spacingAndGlyphs" >Copiar</text>
<rect x="765" y="258" width="7" height="1" fill="#262626"/>
<text y="279" font-size="12.5" fill="#555" font-family="Liberation Sans" x="742.30" textLength="112.75" lengthAdjust="spacingAndGlyphs" font-weight="bold" >Opções de Colagem:</text>
<text y="332" font-size="12.5" fill="#262626" font-family="Liberation Sans" x="741.00" textLength="81.93" lengthAdjust="spacingAndGlyphs" >Colar Especial...</text>
<rect x="741" y="334" width="8" height="1" fill="#262626"/>
<rect x="741" y="340" width="129" height="1" fill="#d5d5d5"/>
<text y="358" font-size="12.5" fill="#262626" font-family="Liberation Sans" x="740.05" textLength="42.09" lengthAdjust="spacingAndGlyphs" >Inserir...</text>
<rect x="740" y="360" width="3" height="1" fill="#262626"/>
<text y="382" font-size="12.5" fill="#262626" font-family="Liberation Sans" x="740.06" textLength="44.18" lengthAdjust="spacingAndGlyphs" >Excluir...</text>
<rect x="740" y="384" width="8" height="1" fill="#262626"/>
<text y="406" font-size="12.5" fill="#262626" font-family="Liberation Sans" x="740.02" textLength="91.43" lengthAdjust="spacingAndGlyphs" >Limpar conteúdo</text>
<rect x="801" y="408" width="3" height="1" fill="#262626"/>
<rect x="741" y="414" width="129" height="1" fill="#d5d5d5"/>
<text y="432" font-size="12.5" fill="#262626" font-family="Liberation Sans" x="740.06" textLength="96.98" lengthAdjust="spacingAndGlyphs" >Formatar células...</text>
<rect x="740" y="434" width="7" height="1" fill="#262626"/>
<text y="456" font-size="12.5" fill="#262626" font-family="Liberation Sans" x="740.06" textLength="107.08" lengthAdjust="spacingAndGlyphs" >Largura da Coluna...</text>
<rect x="800" y="458" width="9" height="1" fill="#262626"/>
<text y="480" font-size="12.5" fill="#262626" font-family="Liberation Sans" x="741.00" textLength="39.16" lengthAdjust="spacingAndGlyphs" >Ocultar</text>
<rect x="741" y="482" width="9" height="1" fill="#262626"/>
<text y="504" font-size="12.5" fill="#262626" font-family="Liberation Sans" x="740.06" textLength="46.89" lengthAdjust="spacingAndGlyphs" >Re-exibir</text>
<rect x="740" y="506" width="9" height="1" fill="#262626"/>
<path d="M716 220.5l8 9.5M724 220.5l-8 9.5" fill="none" stroke="#666" stroke-width="1.6" style="shape-rendering:auto"/>
<circle cx="716" cy="232" r="2.5" fill="none" stroke="#3d7cc9" stroke-width="1.2" style="shape-rendering:auto"/>
<circle cx="724" cy="232" r="2.5" fill="none" stroke="#3d7cc9" stroke-width="1.2" style="shape-rendering:auto"/>
<path d="M713.5 245.5h6l2 2v8h-8z" fill="#fff" stroke="#555" stroke-width="1" style="shape-rendering:auto"/>
<path d="M718.5 248.5h6l3 3v7.5h-9z" fill="#fff" stroke="#555" stroke-width="1" style="shape-rendering:auto"/>
<path d="M715 248.5h3M715 250.5h3M720 252.5h5M720 254.5h5M720 256.5h5" fill="none" stroke="#3d7cc9" stroke-width="1" />
<path d="M714 271.5a1.5 1.5 0 0 1 1.5-1.5h10a1.5 1.5 0 0 1 1.5 1.5v10.5h-13z" fill="#e8c17a" style="shape-rendering:auto"/>
<path d="M717 272v-1.2a1 1 0 0 1 1-1h2v-1a1.5 1.5 0 0 1 3 0v1h2a1 1 0 0 1 1 1v1.2z" fill="#6d6d6d" style="shape-rendering:auto"/>
<path d="M721.5 274.5h4.5l3 3v5h-7.5z" fill="#fff" stroke="#555" stroke-width="1" style="shape-rendering:auto"/>
<path d="M725.8 274.5v3.2h3.2" fill="none" stroke="#555" stroke-width="1" style="shape-rendering:auto"/>
<path d="M739.0 293a2 2 0 0 1 2-2h14a2 2 0 0 1 2 2v17.5a1.5 1.5 0 0 1-1.5 1.5h-15a1.5 1.5 0 0 1-1.5-1.5z" fill="#e8c17a" style="shape-rendering:auto"/>
<rect x="741.5" y="294" width="13" height="16" fill="#fff" />
<path d="M742.0 294.5v-1.5a1 1 0 0 1 1-1h3v-1.2a2 2 0 0 1 4 0v1.2h3a1 1 0 0 1 1 1v1.5z" fill="#6d6d6d" style="shape-rendering:auto"/>
<path d="M742 297.5h10M742 303.5h8M742 306.5h4" fill="none" stroke="#3d7cc9" stroke-width="1" />
<path d="M742 300.5h2M745 300.5h2M748 300.5h2" fill="none" stroke="#e05a3a" stroke-width="1" />
<path d="M752 304l6.5-7.5 2 2-6.5 7.5z" fill="#666" style="shape-rendering:auto"/>
<path d="M743 312c1.5-3.5 3.5-6 7-7 2.5-.8 4.5 1 4 3.2-.8 2.5-4.5 3.8-11 3.8z" fill="#3d7cc9" style="shape-rendering:auto"/>
<path d="M769.0 293a2 2 0 0 1 2-2h14a2 2 0 0 1 2 2v17.5a1.5 1.5 0 0 1-1.5 1.5h-15a1.5 1.5 0 0 1-1.5-1.5z" fill="#e8c17a" style="shape-rendering:auto"/>
<rect x="771.5" y="294" width="13" height="16" fill="#fff" />
<path d="M772.0 294.5v-1.5a1 1 0 0 1 1-1h3v-1.2a2 2 0 0 1 4 0v1.2h3a1 1 0 0 1 1 1v1.5z" fill="#6d6d6d" style="shape-rendering:auto"/>
<path d="M772 297.5h11M772 300.5h11M772 303.5h11M772 306.5h11" fill="none" stroke="#3d7cc9" stroke-width="1" />
<rect x="714.5" y="420.5" width="13" height="14" fill="#fff" stroke="#555" stroke-width="1" />
<rect x="714" y="420" width="14" height="2" fill="#3d7cc9"/>
<rect x="716" y="424" width="2" height="2" fill="#555" />
<rect x="719" y="425" width="7" height="1" fill="#555"/>
<rect x="716" y="429" width="2" height="2" fill="none" stroke="#555" stroke-width="0.6" />
<rect x="719" y="430" width="7" height="1" fill="#555"/>
<rect x="1337" y="203" width="20" height="475" fill="#e6e6e6" />
<rect x="1340.5" y="205.5" width="14" height="14" fill="#fff" stroke="#c6c6c6" stroke-width="1" />
<path d="M1343.5 214.5l4-4 4 4z" fill="#666" style="shape-rendering:auto"/>
<rect x="1340.5" y="221.5" width="14" height="419" fill="#fff" stroke="#c6c6c6" stroke-width="1" />
<rect x="1340.5" y="664.5" width="14" height="14" fill="#fff" stroke="#c6c6c6" stroke-width="1" />
<path d="M1343.5 669.5h8l-4 4z" fill="#666" style="shape-rendering:auto"/>
<rect x="0" y="678" width="1357" height="28" fill="#e6e6e6" />
<rect x="0" y="678" width="1357" height="1" fill="#ababab"/>
<path d="M24 687v8l-4-4z" fill="#b9b9b9" style="shape-rendering:auto"/>
<path d="M49 687v8l4-4z" fill="#b9b9b9" style="shape-rendering:auto"/>
<rect x="92" y="678" width="81" height="24" fill="#fff" />
<rect x="92" y="678" width="1" height="24" fill="#ababab"/>
<rect x="172" y="678" width="1" height="24" fill="#ababab"/>
<rect x="92" y="679" width="81" height="1" fill="#fff"/>
<rect x="92" y="701" width="81" height="2" fill="#217346"/>
<text y="696" font-size="12.5" fill="#217346" font-family="Liberation Sans" x="104.40" textLength="55.55" lengthAdjust="spacingAndGlyphs" font-weight="bold" >Planilha1</text>
<circle cx="214" cy="691.5" r="7.5" fill="none" stroke="#777" stroke-width="1.1" style="shape-rendering:auto"/>
<path d="M210 691.5h8M214 687.5v8" fill="none" stroke="#666" stroke-width="1.6" style="shape-rendering:auto"/>
<rect x="811" y="686" width="2" height="2" fill="#9a9a9a" />
<rect x="811" y="690" width="2" height="2" fill="#9a9a9a" />
<rect x="811" y="694" width="2" height="2" fill="#9a9a9a" />
<rect x="828.5" y="685.5" width="508" height="14" fill="#e6e6e6" stroke="#c6c6c6" stroke-width="1" />
<rect x="828.5" y="685.5" width="14" height="14" fill="#fff" stroke="#c6c6c6" stroke-width="1" />
<path d="M838 689l-4 3.5 4 3.5z" fill="#666" style="shape-rendering:auto"/>
<rect x="842.5" y="685.5" width="453" height="14" fill="#fff" stroke="#c6c6c6" stroke-width="1" />
<rect x="1322.5" y="685.5" width="14" height="14" fill="#fff" stroke="#c6c6c6" stroke-width="1" />
<path d="M1327 689l4 3.5-4 3.5z" fill="#666" style="shape-rendering:auto"/>
<rect x="0" y="706" width="1357" height="22" fill="#f3f3f3" />
<rect x="0" y="706" width="1357" height="1" fill="#d9d9d9"/>
<rect x="0" y="728" width="1357" height="1" fill="#000"/>
<rect x="0" y="727" width="1357" height="1" fill="#fbfbfb"/>
<rect x="335" y="728" width="48" height="1" fill="#3a3a3a"/>
<text y="721" font-size="12.5" fill="#222" font-family="Liberation Sans" x="-1.20" textLength="53.54" lengthAdjust="spacingAndGlyphs" >Scroll Lock</text>
<text y="720" font-size="12.5" fill="#333" font-family="Liberation Sans" x="774.61" textLength="82.64" lengthAdjust="spacingAndGlyphs" >Média: 1772,025</text>
<text y="720" font-size="12.5" fill="#333" font-family="Liberation Sans" x="874.50" textLength="70.06" lengthAdjust="spacingAndGlyphs" >Contagem: 14</text>
<text y="720" font-size="12.5" fill="#333" font-family="Liberation Sans" x="961.20" textLength="78.46" lengthAdjust="spacingAndGlyphs" >Soma: 17720,25</text>
<rect x="1059" y="707" width="39" height="21" fill="#c6c6c6" />
<rect x="1072" y="711" width="3" height="3" fill="none" stroke="#666" stroke-width="1" />
<rect x="1072" y="715" width="3" height="3" fill="none" stroke="#666" stroke-width="1" />
<rect x="1072" y="719" width="3" height="3" fill="none" stroke="#666" stroke-width="1" />
<rect x="1076" y="711" width="3" height="3" fill="none" stroke="#666" stroke-width="1" />
<rect x="1076" y="715" width="3" height="3" fill="none" stroke="#666" stroke-width="1" />
<rect x="1076" y="719" width="3" height="3" fill="none" stroke="#666" stroke-width="1" />
<rect x="1080" y="711" width="3" height="3" fill="none" stroke="#666" stroke-width="1" />
<rect x="1080" y="715" width="3" height="3" fill="none" stroke="#666" stroke-width="1" />
<rect x="1080" y="719" width="3" height="3" fill="none" stroke="#666" stroke-width="1" />
<rect x="1111.5" y="710.5" width="13" height="12" fill="none" stroke="#666" stroke-width="1" />
<rect x="1114.5" y="713.5" width="7" height="6" fill="none" stroke="#666" stroke-width="1" />
<rect x="1116" y="715" width="5" height="1" fill="#666"/>
<rect x="1116" y="717" width="5" height="1" fill="#666"/>
<rect x="1151.5" y="710.5" width="13" height="12" fill="none" stroke="#666" stroke-width="1" />
<path d="M1155.5 710.5v6h5v-6" fill="none" stroke="#666" stroke-width="1" style="shape-rendering:auto"/>
<rect x="1184" y="716" width="8" height="1" fill="#555"/>
<rect x="1197" y="716" width="100" height="1" fill="#aaaaaa"/>
<rect x="1245" y="711" width="5" height="11" fill="#777" />
<path d="M1301 716h9M1305.5 711.5v9" fill="none" stroke="#555" stroke-width="1.2" style="shape-rendering:auto"/>
<text y="720.5" font-size="12.5" fill="#333" font-family="Liberation Sans" x="1323.70" textLength="26.19" lengthAdjust="spacingAndGlyphs" >100%</text></svg></body></html>
